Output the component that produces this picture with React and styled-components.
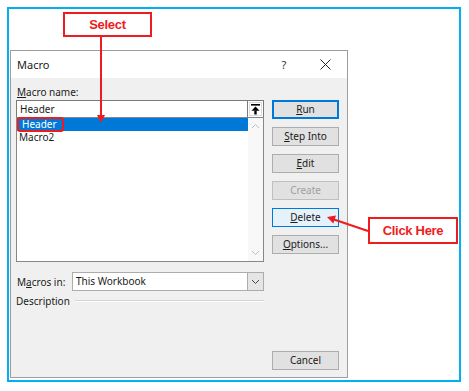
import React from 'react'
import styled, { createGlobalStyle, css } from 'styled-components'

const GlobalStyle = createGlobalStyle`
    html, body {
        margin: 0;
        padding: 0;
        background: #ffffff;
    }
    * {
        box-sizing: border-box;
    }
`

const Page = styled.div`
    position: relative;
    width: 469px;
    height: 391px;
    padding: 7px 8px 9px 7px;
    font-family: "Noto Sans", "Segoe UI", sans-serif;
    font-size: 10px;
    color: #1a1a1a;
    background: #ffffff;
`

const Frame = styled.div`
    height: 100%;
    border: 2px solid #00b0f0;
    padding: 41px 0 0 1px;
`

const Dialog = styled.div`
    width: 338px;
    height: 328px;
    display: flex;
    flex-direction: column;
    border: 1px solid #9d9d9d;
    background: #f0f0f0;
`

const TitleBar = styled.div`
    height: 27px;
    display: flex;
    align-items: center;
    padding: 0 0 0 6px;
    background: #ffffff;
`

const Title = styled.span`
    flex: 1;
    font-size: 11px;
`

const Help = styled.span`
    width: 12px;
    margin-right: 30px;
    font-size: 11px;
    text-align: center;
    color: #333;
`

const CloseIcon = styled.svg`
    width: 11px;
    height: 11px;
    margin-right: 16px;
`

const Body = styled.div`
    flex: 1;
    display: flex;
    padding: 6px 8px 7px 5px;
`

const LeftCol = styled.div`
    width: 248px;
    display: flex;
    flex-direction: column;
`

const RightCol = styled.div`
    width: 67px;
    margin-left: 8px;
    padding-top: 16px;
    display: flex;
    flex-direction: column;
    gap: 8px;
`

const Label = styled.div`
    height: 16px;
    line-height: 16px;
    padding-left: 1px;
`

const Key = styled.span`
    text-decoration: underline;
    text-underline-offset: 1px;
`

const InputRow = styled.div`
    height: 18px;
    display: flex;
`

const TextBox = styled.div`
    flex: 1;
    border: 1px solid #7a7a7a;
    border-right: none;
    background: #ffffff;
    line-height: 16px;
    padding-left: 3px;
`

const IconButton = styled.div`
    width: 17px;
    display: flex;
    align-items: center;
    justify-content: center;
    border: 1px solid #7a7a7a;
    background: #ffffff;
    box-shadow: inset 0 0 0 1px #ffffff, inset 0 0 0 2px #dcdcdc;
`

const ListBox = styled.div`
    height: 145px;
    margin-top: -1px;
    display: flex;
    border: 1px solid #828790;
    background: #ffffff;
`

const ListItems = styled.div`
    flex: 1;
    display: flex;
    flex-direction: column;
`

const ListItem = styled.div`
    height: 13px;
    line-height: 13px;
    padding-left: 2px;
    white-space: nowrap;
    ${p => p.$selected && css`
        background: #0078d7;
        color: #ffffff;
    `}
`

const Marked = styled.span`
    display: inline-block;
    height: 15px;
    line-height: 11px;
    margin: -1px 0 0 -2px;
    padding: 0 5px 0 3px;
    border: 2px solid #ee1c1c;
    border-radius: 3px;
`

const ScrollBar = styled.div`
    width: 15px;
    display: flex;
    flex-direction: column;
    justify-content: space-between;
    align-items: center;
    padding: 5px 0;
    background: #f8f8f8;
`

const MacrosRow = styled.div`
    height: 19px;
    margin-top: 10px;
    display: flex;
    align-items: center;
`

const RowLabel = styled.span`
    width: 56px;
    padding-left: 1px;
`

const Select = styled.div`
    flex: 1;
    height: 19px;
    display: flex;
    border: 1px solid #acacac;
    background: #ffffff;
`

const SelectValue = styled.span`
    flex: 1;
    line-height: 17px;
    padding-left: 3px;
`

const DropButton = styled.div`
    width: 16px;
    display: flex;
    align-items: center;
    justify-content: center;
    border-left: 1px solid #acacac;
    background: #e5e5e5;
`

const Group = styled.div`
    height: 14px;
    margin-top: 3px;
    display: flex;
    align-items: center;
    gap: 5px;
`

const GroupLine = styled.div`
    flex: 1;
    height: 2px;
    border-top: 1px solid #d5d5d5;
    border-bottom: 1px solid #ffffff;
`

const Button = styled.div`
    height: 19px;
    line-height: 17px;
    text-align: center;
    border: 1px solid #adadad;
    background: #e1e1e1;
    ${p => p.$default && css`
        border-color: #0078d7;
        box-shadow: inset 0 0 0 1px #0078d7;
    `}
    ${p => p.$hover && css`
        border-color: #0078d7;
        background: #e5f1fb;
    `}
    ${p => p.$disabled && css`
        border-color: #bfbfbf;
        color: #a0a0a0;
    `}
    ${p => p.$bottom && css`
        margin-top: auto;
    `}
`

const Callout = styled.div`
    position: absolute;
    left: ${p => p.$x}px;
    top: ${p => p.$y}px;
    width: ${p => p.$w}px;
    height: ${p => p.$h}px;
    display: flex;
    align-items: center;
    justify-content: center;
    border: 2px solid #ee1c1c;
    background: #ffffff;
    color: #ee1c1c;
    font-family: "Liberation Sans", Arial, sans-serif;
    font-weight: bold;
    font-size: 13px;
    letter-spacing: -0.3px;
`

const Arrows = styled.svg`
    position: absolute;
    left: 0;
    top: 0;
    pointer-events: none;
`

const Chevron = ({ up, color = '#bdbdbd' }) => (
    <svg width="9" height="6" viewBox="0 0 9 6">
        <polyline
            points={up ? '1,5 4.5,1.5 8,5' : '1,1 4.5,4.5 8,1'}
            fill="none"
            stroke={color}
            strokeWidth="1"
        />
    </svg>
)

const UploadIcon = () => (
    <svg width="9" height="11" viewBox="0 0 9 11">
        <rect x="0" y="0" width="9" height="1.6" fill="#000" />
        <polygon points="4.5,2.5 0.5,6.8 8.5,6.8" fill="#000" />
        <rect x="3.3" y="6.5" width="2.4" height="4" fill="#000" />
    </svg>
)

export default function App() {
    return (
        <Page>
            <GlobalStyle />
            <Frame>
                <Dialog>
                    <TitleBar>
                        <Title>Macro</Title>
                        <Help>?</Help>
                        <CloseIcon viewBox="0 0 11 11">
                            <path d="M0.5 0.5 L10.5 10.5 M10.5 0.5 L0.5 10.5" stroke="#222" strokeWidth="1" />
                        </CloseIcon>
                    </TitleBar>
                    <Body>
                        <LeftCol>
                            <Label><Key>M</Key>acro name:</Label>
                            <InputRow>
                                <TextBox>Header</TextBox>
                                <IconButton><UploadIcon /></IconButton>
                            </InputRow>
                            <ListBox>
                                <ListItems>
                                    <ListItem $selected><Marked>Header</Marked></ListItem>
                                    <ListItem>Macro2</ListItem>
                                </ListItems>
                                <ScrollBar>
                                    <Chevron up />
                                    <Chevron />
                                </ScrollBar>
                            </ListBox>
                            <MacrosRow>
                                <RowLabel>M<Key>a</Key>cros in:</RowLabel>
                                <Select>
                                    <SelectValue>This Workbook</SelectValue>
                                    <DropButton><Chevron color="#444" /></DropButton>
                                </Select>
                            </MacrosRow>
                            <Group>
                                <span>Description</span>
                                <GroupLine />
                            </Group>
                        </LeftCol>
                        <RightCol>
                            <Button $default><Key>R</Key>un</Button>
                            <Button><Key>S</Key>tep Into</Button>
                            <Button><Key>E</Key>dit</Button>
                            <Button $disabled>Create</Button>
                            <Button $hover><Key>D</Key>elete</Button>
                            <Button><Key>O</Key>ptions...</Button>
                            <Button $bottom>Cancel</Button>
                        </RightCol>
                    </Body>
                </Dialog>
            </Frame>

            <Callout $x={63} $y={12} $w={89} $h={25}>Select</Callout>
            <Callout $x={368} $y={217} $w={90} $h={27}>Click Here</Callout>

            <Arrows width="469" height="391" viewBox="0 0 469 391">
                <line x1="101" y1="37" x2="101" y2="116" stroke="#ee1c1c" strokeWidth="2" />
                <polygon points="97,115 105,115 101,123" fill="#ee1c1c" />
                <line x1="368" y1="231" x2="334" y2="219.5" stroke="#ee1c1c" strokeWidth="2" />
                <polygon points="327,217 336,215.6 333.3,223.6" fill="#ee1c1c" />
            </Arrows>
        </Page>
    )
}
